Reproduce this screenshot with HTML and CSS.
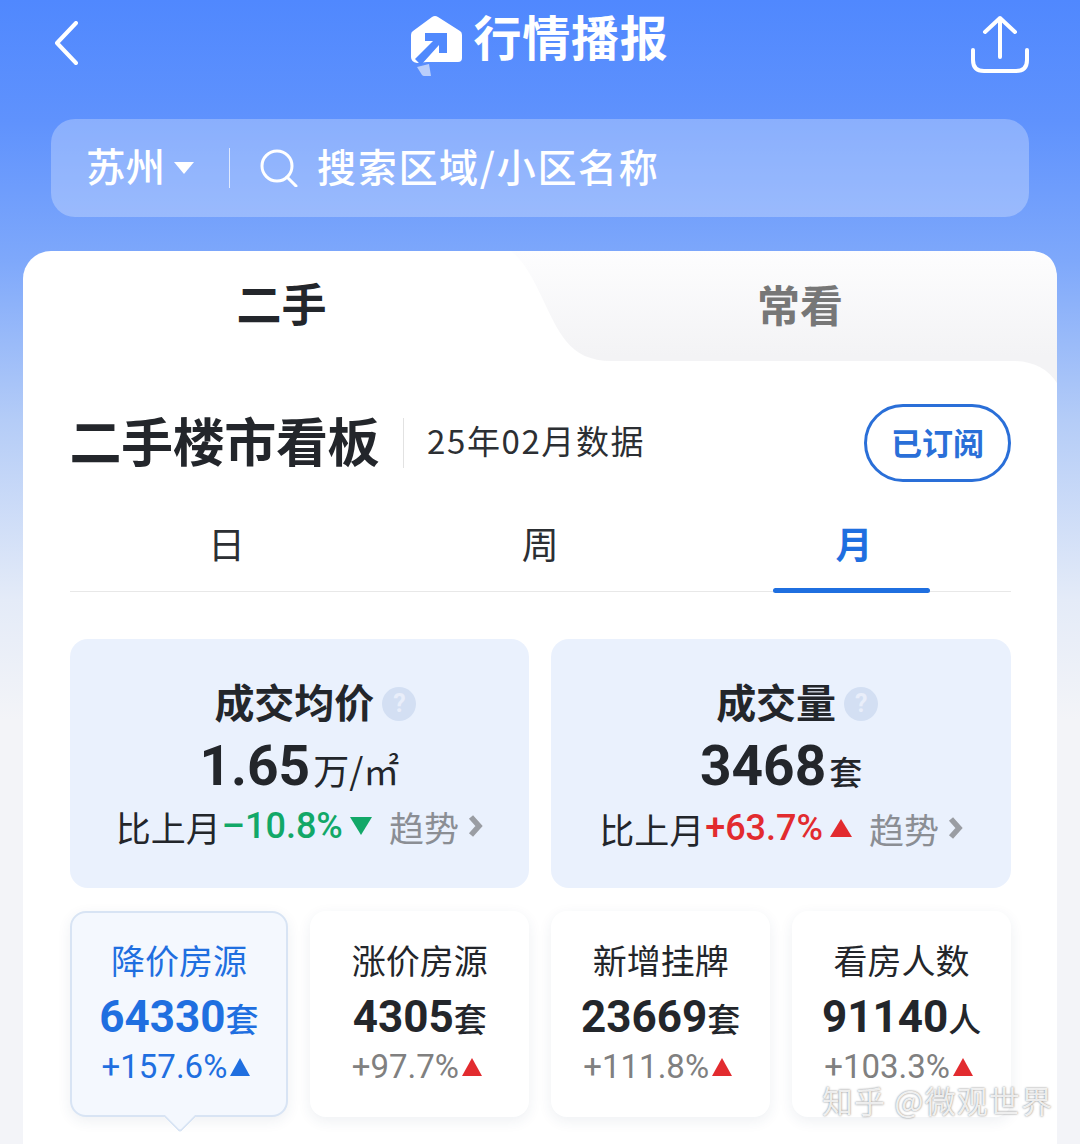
FILE: index.html
```html
<!DOCTYPE html>
<html lang="zh-CN">
<head>
    <meta charset="UTF-8">
    <title>行情播报</title>
    <link rel="stylesheet" href="styles.css">
</head>
<body>
    <div class="page">
        <div class="top-bar">
            <svg class="back-icon" viewBox="0 0 24 44"><path d="M22 2 3 22l19 20"/></svg>
            <div class="brand">
                <svg class="brand-logo" viewBox="0 0 65 70">
                    <path class="logo-tail" d="M12 57 24 54 26 66H19Q18 66 17 65Z"/>
                    <path class="logo-house" d="M27 7Q30 5 33 7L55 21Q57 22 57 25V48Q57 52 53 52H22L12 53Q6 52 6 47V25Q6 22 8 21Z"/>
                    <path class="logo-arrow" d="M20 23H42V43H34V35L16 55 10 49 28 31H20Z"/>
                </svg>
                <span class="brand-name">行情播报</span>
            </div>
            <svg class="share-icon" viewBox="0 0 58 58">
                <path d="M29 42V3M14 17 29 3l15 14M2 35v10q0 11 11 11h32q11 0 11-11V35"/>
            </svg>
        </div>

        <div class="search-bar">
            <span class="city">苏州</span>
            <i class="city-caret"></i>
            <i class="search-line"></i>
            <svg class="search-icon" viewBox="0 0 38 38"><circle cx="17" cy="17" r="15"/><path d="m27 28 9 9"/></svg>
            <span class="search-text">搜索区域/小区名称</span>
        </div>

        <div class="card">
            <div class="tabs">
                <svg class="tab-bg" viewBox="0 0 1034 132">
                    <defs>
                        <linearGradient id="tabFill" x1="0" y1="0" x2="0" y2="1">
                            <stop offset="0" stop-color="#fdfdfe"/>
                            <stop offset="0.8" stop-color="#f3f3f5"/>
                        </linearGradient>
                    </defs>
                    <path fill="url(#tabFill)" d="M488 0C513 20 523 65 543 90 553 103 568 110 588 110H990C1010 110 1025 118 1034 132V28Q1034 0 1006 0Z"/>
                </svg>
                <div class="tab tab-on">二手</div>
                <div class="tab tab-off">常看</div>
            </div>

            <div class="content">
                <div class="board-head">
                    <h1 class="board-title">二手楼市看板</h1>
                    <span class="board-date">25年02月数据</span>
                    <span class="sub-btn">已订阅</span>
                </div>

                <div class="periods">
                    <div class="period">日</div>
                    <div class="period">周</div>
                    <div class="period period-on">月</div>
                </div>

                <div class="main-stats">
                    <div class="main-stat">
                        <div class="main-name">成交均价<i class="help">?</i></div>
                        <div class="main-value">1.65<span class="main-unit">万/㎡</span></div>
                        <div class="main-delta">
                            <span>比上月</span><span class="pct pct-down">–10.8%</span><i class="tri tri-down"></i>
                            <span class="trend">趋势</span><svg class="trend-arrow" viewBox="0 0 16 24"><path d="m4 3 8 9-8 9"/></svg>
                        </div>
                    </div>
                    <div class="main-stat">
                        <div class="main-name">成交量<i class="help">?</i></div>
                        <div class="main-value">3468<span class="main-unit main-unit-set">套</span></div>
                        <div class="main-delta">
                            <span>比上月</span><span class="pct pct-up">+63.7%</span><i class="tri tri-up"></i>
                            <span class="trend">趋势</span><svg class="trend-arrow" viewBox="0 0 16 24"><path d="m4 3 8 9-8 9"/></svg>
                        </div>
                    </div>
                </div>

                <div class="mini-stats">
                    <div class="mini-stat mini-on">
                        <div class="mini-name">降价房源</div>
                        <div class="mini-value">64330<span class="mini-unit">套</span></div>
                        <div class="mini-delta">+157.6%<i class="mini-tri"></i></div>
                    </div>
                    <div class="mini-stat">
                        <div class="mini-name">涨价房源</div>
                        <div class="mini-value">4305<span class="mini-unit">套</span></div>
                        <div class="mini-delta">+97.7%<i class="mini-tri"></i></div>
                    </div>
                    <div class="mini-stat">
                        <div class="mini-name">新增挂牌</div>
                        <div class="mini-value">23669<span class="mini-unit">套</span></div>
                        <div class="mini-delta">+111.8%<i class="mini-tri"></i></div>
                    </div>
                    <div class="mini-stat">
                        <div class="mini-name">看房人数</div>
                        <div class="mini-value">91140<span class="mini-unit">人</span></div>
                        <div class="mini-delta">+103.3%<i class="mini-tri"></i></div>
                    </div>
                </div>
            </div>
        </div>

        <div class="watermark">知乎 @微观世界</div>
    </div>
</body>
</html>
```

FILE: styles.css
```css
* {
    box-sizing: border-box;
}
html, body {
    margin: 0;
    padding: 0;
}
body {
    font-family: "Noto Sans CJK SC", "Noto Sans", sans-serif;
    color: #23262b;
}
.page {
    position: relative;
    width: 1080px;
    height: 1144px;
    overflow: hidden;
    background: linear-gradient(#5088fe 0, #5f92fd 120px, #7ea8fb 260px, #b4ccf7 420px, #e4ebf8 600px, #f3f4f8 720px);
}

/* top bar */
.top-bar {
    display: flex;
    align-items: center;
    justify-content: space-between;
    height: 90px;
    padding: 0 51px 0 54px;
}
.back-icon {
    width: 24px;
    height: 44px;
    margin-top: -4px;
    fill: none;
    stroke: #fff;
    stroke-width: 4;
    stroke-linecap: round;
    stroke-linejoin: round;
}
.brand {
    display: flex;
    align-items: center;
    gap: 4px;
    margin-left: 24px;
}
.brand-logo {
    width: 65px;
    height: 70px;
}
.logo-house {
    fill: #fff;
}
.logo-tail {
    fill: #b9cefb;
}
.logo-arrow {
    fill: #5089fd;
}
.brand-name {
    margin-top: -20px;
    font-size: 48px;
    font-weight: 700;
    letter-spacing: 0.7px;
    line-height: 60px;
    color: #fff;
}
.share-icon {
    width: 58px;
    height: 58px;
    margin-top: -3px;
    fill: none;
    stroke: #fff;
    stroke-width: 4;
    stroke-linecap: round;
    stroke-linejoin: round;
}

/* search */
.search-bar {
    display: flex;
    align-items: center;
    height: 98px;
    margin: 29px 51px 34px;
    padding-left: 35px;
    border-radius: 24px;
    background: rgba(255, 255, 255, 0.27);
    color: #fff;
}
.city {
    margin-bottom: 6px;
    font-size: 39.5px;
    font-weight: 500;
    line-height: 50px;
}
.city-caret {
    width: 0;
    height: 0;
    margin-left: 9px;
    border-left: 10px solid transparent;
    border-right: 10px solid transparent;
    border-top: 12px solid #fff;
}
.search-line {
    width: 1px;
    height: 40px;
    margin: 0 30px 0 35px;
    background: rgba(255, 255, 255, 0.7);
}
.search-icon {
    width: 38px;
    height: 38px;
    margin-right: 19px;
    fill: none;
    stroke: #fff;
    stroke-width: 3;
    stroke-linecap: round;
}
.search-text {
    margin-bottom: 6px;
    font-size: 39px;
    font-weight: 500;
    letter-spacing: 1.7px;
    line-height: 50px;
}

/* card */
.card {
    height: 893px;
    margin: 0 23px;
    border-radius: 28px 28px 0 0;
    background: #fff;
}
.tabs {
    position: relative;
    display: grid;
    grid-template-columns: 1fr 1fr;
    height: 110px;
}
.tab-bg {
    position: absolute;
    left: 0;
    top: 0;
    width: 1034px;
    height: 132px;
}
.tab {
    position: relative;
    text-align: center;
    font-weight: 700;
    line-height: 104px;
}
.tab-on {
    font-size: 45px;
    color: #23262b;
}
.tab-off {
    padding-left: 3px;
    font-size: 43px;
    color: #777;
}
.content {
    padding: 43px 46px 0 46.5px;
}

/* board heading */
.board-head {
    display: flex;
    align-items: center;
    height: 78px;
}
.board-title {
    margin: 0;
    padding-right: 24px;
    padding-bottom: 6px;
    border-right: 1px solid #e2e2e2;
    font-size: 52px;
    font-weight: 700;
    letter-spacing: -0.4px;
    line-height: 44px;
}
.board-date {
    margin: 0 0 6px 23px;
    font-size: 33px;
    letter-spacing: 1.6px;
    color: #2c2f33;
}
.sub-btn {
    width: 147px;
    height: 78px;
    margin-left: auto;
    border: 3px solid #2a6fd8;
    border-radius: 39px;
    text-align: center;
    font-size: 31px;
    font-weight: 700;
    line-height: 70px;
    color: #2a6fd8;
}

/* day week month */
.periods {
    display: grid;
    grid-template-columns: repeat(3, 1fr);
    height: 88px;
    margin-top: 22px;
    border-bottom: 1px solid #e8e8e8;
}
.period {
    position: relative;
    text-align: center;
    font-size: 37px;
    line-height: 78px;
    color: #2c2f33;
}
.period-on {
    font-weight: 700;
    color: #1f6fe0;
}
.period-on::after {
    content: "";
    position: absolute;
    left: 76px;
    bottom: -2px;
    width: 157px;
    height: 5px;
    border-radius: 3px;
    background: #1f6fe0;
}

/* big stats */
.main-stats {
    display: grid;
    grid-template-columns: 1fr 1fr;
    gap: 22px;
    margin-top: 47px;
}
.main-stat {
    height: 249px;
    padding-top: 37px;
    border-radius: 18px;
    background: #eaf1fd;
    text-align: center;
}
.main-name {
    display: flex;
    align-items: center;
    justify-content: center;
    padding-left: 32px;
    font-size: 40px;
    font-weight: 700;
    line-height: 50px;
}
.help {
    width: 34px;
    height: 34px;
    margin: 6px 0 0 8px;
    border-radius: 50%;
    background: #d3dff3;
    font-family: "Roboto", sans-serif;
    font-size: 25px;
    font-style: normal;
    font-weight: 700;
    line-height: 34px;
    color: #e9eefa;
}
.main-value {
    margin-top: 9px;
    font-family: "Roboto", sans-serif;
    font-size: 55px;
    font-weight: 700;
    line-height: 62px;
}
.main-unit {
    margin-left: 3px;
    font-family: "Noto Sans CJK SC", sans-serif;
    font-size: 36px;
    font-weight: 400;
}
.main-unit-set {
    font-size: 33px;
    font-weight: 500;
}
.main-delta {
    display: flex;
    align-items: center;
    justify-content: center;
    height: 50px;
    margin-top: 1px;
    font-size: 35px;
}
.pct {
    margin-left: 1px;
    font-family: "Roboto", sans-serif;
    font-size: 36px;
    font-weight: 500;
}
.pct-down {
    color: #12a868;
}
.pct-up {
    color: #e22b2f;
}
.tri {
    width: 0;
    height: 0;
    margin-left: 7px;
    border-left: 11px solid transparent;
    border-right: 11px solid transparent;
}
.tri-down {
    border-top: 18px solid #12a868;
}
.tri-up {
    border-bottom: 18px solid #e22b2f;
}
.trend {
    margin-left: 17px;
    color: #8b8e94;
}
.trend-arrow {
    width: 16px;
    height: 24px;
    margin-left: 8px;
    fill: none;
    stroke: #9a9da3;
    stroke-width: 5.5;
}

/* small stats */
.mini-stats {
    display: grid;
    grid-template-columns: repeat(4, 1fr);
    gap: 22px;
    margin-top: 23px;
}
.mini-stat {
    position: relative;
    height: 206px;
    padding-top: 27px;
    border-radius: 16px;
    background: #fff;
    box-shadow: 0 4px 14px rgba(40, 60, 100, 0.08);
    text-align: center;
}
.mini-on {
    padding-top: 25px;
    border: 2px solid #d8e4f4;
    background: #f4f8fe;
    color: #1f6fe0;
}
.mini-on::after {
    content: "";
    position: absolute;
    left: 50%;
    bottom: -13px;
    width: 22px;
    height: 22px;
    margin-left: -11px;
    border-right: 2px solid #d8e4f4;
    border-bottom: 2px solid #d8e4f4;
    border-radius: 0 0 4px 0;
    background: #f4f8fe;
    transform: rotate(45deg);
}
.mini-name {
    font-size: 34px;
    line-height: 44px;
}
.mini-value {
    margin-top: 10px;
    font-family: "Roboto", sans-serif;
    font-size: 44px;
    font-weight: 700;
    line-height: 50px;
}
.mini-unit {
    font-family: "Noto Sans CJK SC", sans-serif;
    font-size: 33px;
    font-weight: 500;
}
.mini-delta {
    display: flex;
    align-items: center;
    justify-content: center;
    margin-top: 6px;
    padding-right: 6px;
    font-family: "Roboto", sans-serif;
    font-size: 33px;
    line-height: 36px;
    color: #808080;
}
.mini-on .mini-delta {
    color: #1f6fe0;
}
.mini-tri {
    width: 0;
    height: 0;
    margin-left: 3px;
    border-left: 10.5px solid transparent;
    border-right: 10.5px solid transparent;
    border-bottom: 18px solid #e22b2f;
}
.mini-on .mini-tri {
    border-bottom-color: #1f6fe0;
}

.watermark {
    position: absolute;
    left: 822px;
    top: 1084px;
    font-size: 31px;
    line-height: 32px;
    letter-spacing: 1.1px;
    white-space: nowrap;
    color: rgba(255, 255, 255, 0.85);
    text-shadow: 0 0 2px rgba(0, 0, 0, 0.55);
}
```
